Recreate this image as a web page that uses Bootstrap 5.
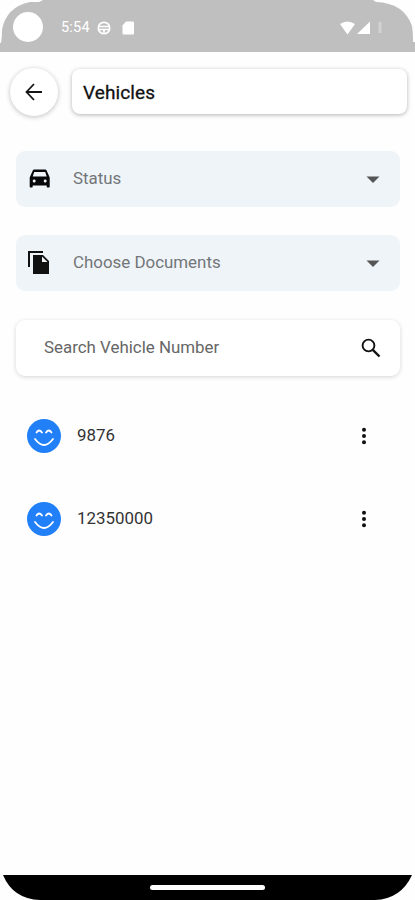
<!DOCTYPE html>
<html lang="en">
<head>
<meta charset="utf-8">
<meta name="viewport" content="width=device-width, initial-scale=1">
<title>Vehicles</title>
<link href="https://cdn.jsdelivr.net/npm/bootstrap@5.3.0/dist/css/bootstrap.min.css" rel="stylesheet">
<style>
body{font-family:Roboto,"Liberation Sans",sans-serif;background:#fefefe;color:#111;overflow:hidden}
svg{display:block;flex:none}
.screen{height:900px;width:415px}
.status-bar{height:52px;background:#bfbfbf;padding:4px 30px 0 13px;clip-path:path("M0 52V43H1Q2 38 2 30Q6 7 30 2H39L43 0H373L376 2Q404 3 412 26Q413 32 413 42H415V52Z")}
.camera{width:30px;height:30px;background:#fff;margin-top:-2px}
.clock{font-size:14.5px;margin-left:18px;width:36px;line-height:20px;letter-spacing:.2px}
.sd-card{margin-left:11px}
.top-row{padding:16px 8px 0 10px;height:99px}
.back{width:48px;height:48px;background:#fff;border:0;box-shadow:0 1px 5px rgba(0,0,0,.25)}
.title-box{height:45px;margin:1px 0 0 14px;padding:3px 0 0 11px;border-radius:8px;background:#fff;box-shadow:0 1px 4px rgba(0,0,0,.3);font-size:19px;font-weight:400;letter-spacing:.1px;-webkit-text-stroke:.3px #111}
.field{height:56px;margin:0 15px 28px 16px;border-radius:9px;font-size:16.900px;color:#737679}
.picker{background:#eff4f8;padding:0 20px 0 11px}
.picker .label-text{margin-left:22px}
.search{background:#fff;margin-top:29px;padding:0 18px 0 28px;box-shadow:0 1px 4px rgba(0,0,0,.17);color:#666}
.entries{padding:15px 39px 0 27px}
.entry{height:34px;margin-bottom:49px;font-size:16.900px;color:#333}
.nav-strip{height:25px;background:#000;clip-path:path("M3 0H412Q401 24 375 25H40Q13 24 3 0Z")}
.pill{width:115px;height:5px;background:#fff}
</style>
<script src="https://cdn.jsdelivr.net/npm/bootstrap@5.3.0/dist/js/bootstrap.bundle.min.js"></script>
</head>
<body>
<div class="screen d-flex flex-column">
  <header class="status-bar d-flex align-items-center text-white">
    <span class="camera rounded-circle"></span>
    <span class="clock">5:54</span>
    <svg width="14" height="14" viewBox="0 0 14 14" fill="none" stroke="#fff" stroke-width="1.700"><circle cx="7" cy="7" r="5.700"/><path d="M2 5.500H12M2 8.500H12M7 8.500V12.500"/></svg>
    <svg class="sd-card" width="12" height="14" viewBox="0 0 12 14" fill="#fff"><path d="M4 .5H11Q12 .5 12 1.500V12.500Q12 13.500 11 13.500H1.500Q.5 13.500.5 12.500V4.500Z"/></svg>
    <svg class="ms-auto" width="46" height="14" viewBox="0 0 46 14" fill="#fff"><path d="M1 3Q8-2 16 3L8.500 13.500ZM18 13H31V.5Z"/><path d="M41 1V12" stroke="#fff" stroke-width="3" opacity=".3"/></svg>
  </header>

  <div class="top-row d-flex align-items-start">
    <button class="back rounded-circle d-flex align-items-center justify-content-center p-0" aria-label="Back">
      <svg width="18" height="18" viewBox="0 0 18 18" fill="none" stroke="#161616" stroke-width="1.800"><path d="M9 1L1.500 9L9 17M1.500 9H17"/></svg>
    </button>
    <h1 class="title-box flex-grow-1 d-flex align-items-center mb-0">Vehicles</h1>
  </div>

  <main class="flex-grow-1">
    <div class="field picker d-flex align-items-center">
      <svg width="24" height="24" viewBox="0 0 24 24" fill="#080808"><path d="M18.920 5.010C18.720 4.420 18.160 4 17.500 4h-11c-.66 0-1.210.42-1.420 1.010L2 12v9c0 .55.45 1 1 1h1c.55 0 1-.45 1-1v-1h14v1c0 .55.45 1 1 1h1c.55 0 1-.45 1-1v-9l-3.080-6.990zM6.500 17C5.670 17 5 16.330 5 15.500S5.670 14 6.500 14 8 14.670 8 15.500 7.330 17 6.500 17zm11 0c-.83 0-1.500-.67-1.500-1.500s.67-1.500 1.500-1.500 1.500.67 1.500 1.500-.67 1.500-1.500 1.500zM5 11l1.500-4.500h11L19 11H5z" transform="translate(.7 -1.500)"/></svg>
      <span class="label-text">Status</span>
      <svg class="ms-auto" width="14" height="7" viewBox="0 0 14 7" fill="#555"><path d="M.5.5H13.500L7 7Z"/></svg>
    </div>
    <div class="field picker d-flex align-items-center mb-0">
      <svg width="24" height="26" viewBox="0 0 24 26" fill="#111"><path d="M1 17V1H16V3H3V17ZM6 5H16L22 11V24H6ZM15 6.500V12H20.500Z" fill-rule="evenodd"/></svg>
      <span class="label-text">Choose Documents</span>
      <svg class="ms-auto" width="14" height="7" viewBox="0 0 14 7" fill="#555"><path d="M.5.5H13.500L7 7Z"/></svg>
    </div>
    <div class="field search d-flex align-items-center">
      <span>Search Vehicle Number</span>
      <svg class="ms-auto" width="22" height="22" viewBox="0 0 22 22" fill="none" stroke="#111" stroke-width="1.900"><circle cx="8.500" cy="8.500" r="5.900"/><path d="M12.800 12.800L19.500 19.500" stroke-width="2.400"/></svg>
    </div>

    <div class="entries">
      <div class="entry d-flex align-items-center">
        <svg width="34" height="34" viewBox="0 0 34 34" fill="none" stroke="#fff" stroke-width="1.800" stroke-linecap="round"><circle cx="17" cy="17" r="17" fill="#217ff7" stroke="none"/><path d="M9.500 13.500Q12 9.500 15 13.500M19 13.500Q22 9.500 24.500 13.500M8 20Q17 32 26 20"/></svg>
        <span class="ms-3">9876</span>
        <svg class="ms-auto" width="22" height="18" viewBox="0 0 22 18" fill="#111"><circle cx="10" cy="2.700" r="2"/><circle cx="10" cy="9" r="2"/><circle cx="10" cy="15.300" r="2"/></svg>
      </div>
      <div class="entry d-flex align-items-center">
        <svg width="34" height="34" viewBox="0 0 34 34" fill="none" stroke="#fff" stroke-width="1.800" stroke-linecap="round"><circle cx="17" cy="17" r="17" fill="#217ff7" stroke="none"/><path d="M9.500 13.500Q12 9.500 15 13.500M19 13.500Q22 9.500 24.500 13.500M8 20Q17 32 26 20"/></svg>
        <span class="ms-3">12350000</span>
        <svg class="ms-auto" width="22" height="18" viewBox="0 0 22 18" fill="#111"><circle cx="10" cy="2.700" r="2"/><circle cx="10" cy="9" r="2"/><circle cx="10" cy="15.300" r="2"/></svg>
      </div>
    </div>
  </main>

  <footer class="nav-strip d-flex align-items-center justify-content-center"><span class="pill rounded-pill"></span></footer>
</div>
</body>
</html>
